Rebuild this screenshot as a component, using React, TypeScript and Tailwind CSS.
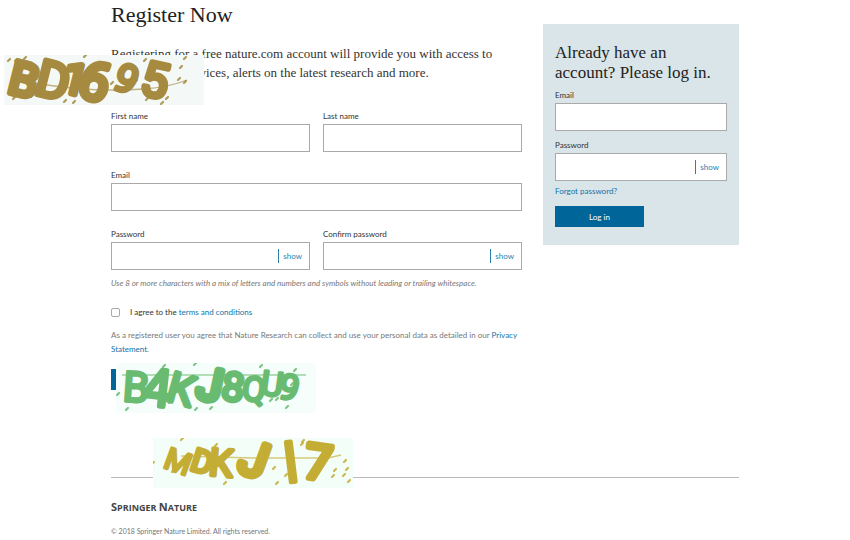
import { useState } from "react";
import type { ReactNode } from "react";

const sans = "font-['Lato',sans-serif]";
const serif = "font-['Liberation_Serif',serif]";

function Field({ id, label, type = "text" }: { id: string; label: string; type?: string }) {
  const [shown, setShown] = useState(false);
  const isPassword = type === "password";
  return (
    <div>
      <label htmlFor={id} className="block text-[8px] leading-[15px]">
        {label}
      </label>
      <div className="flex h-7 items-center border border-[#aaaaaa] bg-white">
        <input
          id={id}
          name={id}
          type={isPassword && shown ? "text" : type}
          className="h-full min-w-0 flex-1 bg-transparent px-2 text-[8px] outline-none"
        />
        {isPassword && (
          <button
            type="button"
            onClick={() => setShown(!shown)}
            className="mr-[7px] h-3.5 border-l border-[#2b7fae] pl-1 text-[8px] leading-3 text-[#2b7fae]"
          >
            show
          </button>
        )}
      </div>
    </div>
  );
}

type Glyph = { char: string; x: number; y: number; size: number; turn: number; weight: number };

function Captcha({
  label,
  ink,
  paper,
  glyphs,
  thread,
  specks,
  place,
}: {
  label: string;
  ink: string;
  paper: string;
  glyphs: Glyph[];
  thread: string;
  specks: number[][];
  place: string;
}) {
  return (
    <svg
      role="img"
      aria-label={label}
      viewBox="0 0 200 50"
      className={`absolute h-[50px] w-[200px] ${place}`}
    >
      <rect width="200" height="50" fill={paper} />
      <path d={thread} fill="none" stroke={ink} strokeWidth="1.3" opacity="0.65" />
      {specks.map(([x, y]) => (
        <path key={`${x}-${y}`} d={`M${x - 1} ${y + 1}l2-2`} stroke={ink} strokeWidth="2.2" strokeLinecap="round" opacity="0.85" />
      ))}
      {glyphs.map((g) => (
        <text
          key={g.x}
          x={g.x}
          y={g.y}
          fontFamily="Roboto, sans-serif"
          fontSize={g.size}
          textAnchor="middle"
          fill={ink}
          stroke={ink}
          strokeWidth={g.weight}
          strokeLinejoin="round"
          transform={`rotate(${g.turn} ${g.x} ${g.y - g.size / 3})`}
        >
          {g.char}
        </text>
      ))}
    </svg>
  );
}

function TextLink({ children }: { children: ReactNode }) {
  return (
    <a href="#" className="text-[#0f73a8]">
      {children}
    </a>
  );
}

export default function App() {
  return (
    <div className={`relative min-h-screen overflow-x-hidden bg-white text-[#333333] ${sans}`}>
      <div className="mx-auto max-w-[628px]">
        <div className="grid grid-cols-[1fr_196px] items-start gap-[21px]">
          <main>
            <h1 className={`pt-px text-[22px] leading-7 text-[#222222] ${serif}`}>Register Now</h1>
            <p className={`mt-[15px] max-w-[390px] text-[13px] leading-[19px] ${serif}`}>
              Registering for a free nature.com account will provide you with access to our
              briefings, services, alerts on the latest research and more.
            </p>
            <form>
              <div className="mt-[27px] grid grid-cols-2 gap-[13px]">
                <Field id="first-name" label="First name" />
                <Field id="last-name" label="Last name" />
              </div>
              <div className="mt-4">
                <Field id="email" label="Email" type="email" />
              </div>
              <div className="mt-4 grid grid-cols-2 gap-[13px]">
                <Field id="password" label="Password" type="password" />
                <Field id="confirm-password" label="Confirm password" type="password" />
              </div>
              <p className="mt-[5px] text-[8px] leading-4 text-[#777777] italic">
                Use 8 or more characters with a mix of letters and numbers and symbols without leading or trailing whitespace.
              </p>
              <div className="mt-[13px] flex items-center text-[8px] leading-4">
                <input
                  id="terms"
                  type="checkbox"
                  className="mr-2.5 size-[9px] appearance-none rounded-xs border border-[#aaaaaa] bg-white checked:bg-[#006699]"
                />
                <label htmlFor="terms">
                  I agree to the <TextLink>terms and conditions</TextLink>
                </label>
              </div>
              <p className="mt-2 text-[8px] leading-[14px] text-[#777777]">
                As a registered user you agree that Nature Research can collect and use your personal data as detailed in our{" "}
                <TextLink>Privacy Statement</TextLink>.
              </p>
              <button type="submit" aria-label="Register" className="mt-[13px] block h-[21px] w-[89px] bg-[#006699]" />
            </form>
          </main>
          <aside className="mt-6 bg-[#dae5e9] px-3 pt-[19px] pb-[18px]">
            <h2 className={`text-[17px] leading-5 text-[#222222] ${serif}`}>
              Already have an account? Please log in.
            </h2>
            <form className="mt-[5px]">
              <Field id="login-email" label="Email" type="email" />
              <div className="mt-[7px]">
                <Field id="login-password" label="Password" type="password" />
              </div>
              <p className="mt-0.5 text-[8px] leading-4">
                <TextLink>Forgot password?</TextLink>
              </p>
              <button type="submit" className="mt-[7px] block h-[21px] w-[89px] bg-[#006699] text-[8px] text-white">
                Log in
              </button>
            </form>
          </aside>
        </div>
        <footer className="mt-[87px] border-t border-[#bbbbbb] pt-5">
          <p className="font-['Open_Sans',sans-serif] text-[9px] leading-[18px] font-bold text-[#444444]">
            <span className="text-[11px]">S</span>PRINGER <span className="text-[11px]">N</span>ATURE
          </p>
          <p className="mt-1.5 text-[7px] leading-4 text-[#777777]">
            © 2018 Springer Nature Limited. All rights reserved.
          </p>
        </footer>
      </div>
      <Captcha
        label="BD1695"
        ink="#a58a40"
        paper="#f4f9f7"
        place="top-[55px] left-1"
        thread="M30 28Q90 38 140 34Q165 32 183 25"
        specks={[[5, 5], [12, 5], [21, 3], [81, 1], [61, 46], [70, 47], [10, 43], [28, 41], [141, 5], [181, 3], [177, 12], [175, 24], [181, 27], [163, 43], [158, 48], [143, 44], [108, 28], [132, 26]]}
        glyphs={[
          { char: "B", x: 20, y: 41, size: 46, turn: 14, weight: 6 },
          { char: "D", x: 49, y: 43, size: 50, turn: 14, weight: 5 },
          { char: "1", x: 71, y: 39, size: 42, turn: 14, weight: 6 },
          { char: "6", x: 91, y: 45, size: 54, turn: 20, weight: 6 },
          { char: "9", x: 122, y: 38, size: 40, turn: 26, weight: 4 },
          { char: "5", x: 151, y: 42, size: 48, turn: 12, weight: 5 },
        ]}
      />
      <Captcha
        label="B4KJ8QU9"
        ink="#6abb72"
        paper="#f5fefa"
        place="top-[363px] left-[116px]"
        thread="M6 12H190"
        specks={[[48, 3], [2, 31], [11, 46], [79, 1], [80, 46], [95, 45], [86, 26], [99, 36], [108, 28], [145, 3], [179, 7], [171, 44], [155, 37], [161, 36], [176, 21], [54, 39]]}
        glyphs={[
          { char: "B", x: 20, y: 39, size: 42, turn: 4, weight: 3 },
          { char: "4", x: 41, y: 43, size: 52, turn: 6, weight: 4 },
          { char: "K", x: 65, y: 41, size: 42, turn: 16, weight: 4 },
          { char: "J", x: 94, y: 37, size: 44, turn: 12, weight: 7 },
          { char: "8", x: 117, y: 38, size: 40, turn: 8, weight: 4 },
          { char: "Q", x: 138, y: 38, size: 34, turn: 8, weight: 3 },
          { char: "U", x: 156, y: 33, size: 34, turn: 8, weight: 3 },
          { char: "9", x: 173, y: 37, size: 36, turn: 14, weight: 3 },
        ]}
      />
      <Captcha
        label="MDKJ17"
        ink="#c4ad34"
        paper="#f3fef9"
        place="top-[438px] left-[153px]"
        thread="M28 18L100 20H175L188 17"
        specks={[[29, 1], [0, 25], [63, 7], [78, 15], [20, 33], [72, 45], [121, 30], [124, 45], [133, 37], [150, 3], [149, 6], [182, 32], [192, 23], [194, 31], [191, 37], [180, 38], [196, 43]]}
        glyphs={[
          { char: "M", x: 25, y: 34, size: 30, turn: 20, weight: 3 },
          { char: "D", x: 49, y: 35, size: 32, turn: 18, weight: 4 },
          { char: "K", x: 68, y: 38, size: 38, turn: 5, weight: 4 },
          { char: "J", x: 101, y: 38, size: 48, turn: 20, weight: 7 },
          { char: "l", x: 138, y: 44, size: 54, turn: -7, weight: 4 },
          { char: "7", x: 165, y: 41, size: 48, turn: 8, weight: 6 },
        ]}
      />
    </div>
  );
}
